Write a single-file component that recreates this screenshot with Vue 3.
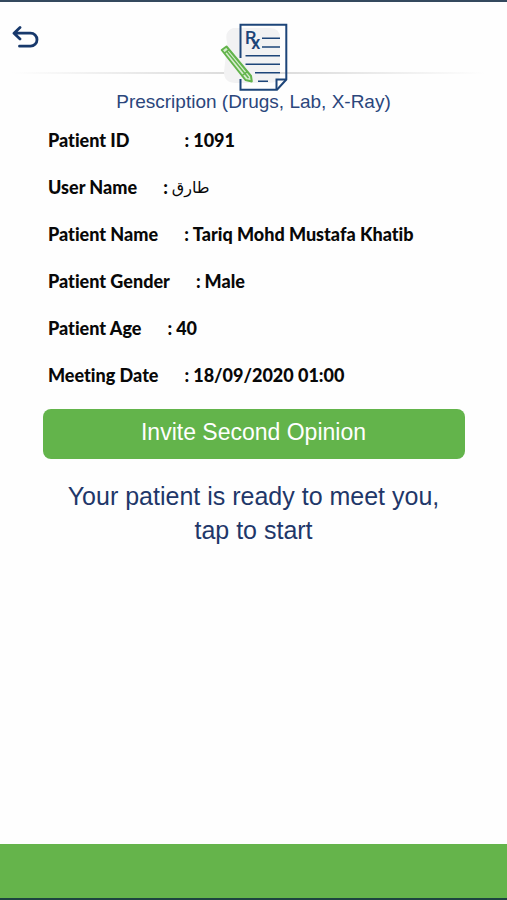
<script setup>
const details = [
  { label: 'Patient ID', value: '1091', wide: true },
  { label: 'User Name', value: 'طارق', arabic: true },
  { label: 'Patient Name', value: 'Tariq Mohd Mustafa Khatib' },
  { label: 'Patient Gender', value: 'Male' },
  { label: 'Patient Age', value: '40' },
  { label: 'Meeting Date', value: '18/09/2020 01:00' },
]
</script>

<template>
  <div class="screen">
    <header class="header">
      <hr class="rule" />
      <button class="back" type="button" aria-label="Back">
        <svg width="28" height="24" viewBox="0 0 28 24" fill="none" stroke="#17386b" stroke-width="2.800" stroke-linecap="round" stroke-linejoin="round">
          <path d="M8 1.500 2 7.200 8 12.900M2.500 7.200H18.500A6.500 6.500 0 0 1 18.500 20.200H7.500" />
        </svg>
      </button>
      <svg class="emblem" width="74" height="72" viewBox="217 20 74 72" fill="none" aria-hidden="true">
        <path d="M233 28h37q10 0 10 10v35q0 10-12 10h-32q-12 0-12-11l2-18q2-5 1-12-3-11 6-14Z" fill="#f2f2f3" />
        <path d="M240.500 58V24.800H286.300V79.500L277 89.700H240.500V79" stroke="#1d4579" stroke-width="2" />
        <path d="M276.500 89V79.500H286" stroke="#1d4579" stroke-width="2" />
        <path d="M262 38.200h18M262 47h18M245.500 55.700H280M245.500 64.300H280M255 72.700h25M258 81.200h10" stroke="#1d4579" stroke-width="1.600" />
        <text class="rx" x="245" y="44" font-size="18">R<tspan dx="-5" dy="5">x</tspan></text>
        <path d="M221.700 50 226.500 46.500 251 76l.8 5.500-6.300-1.500Z" fill="#d5ecce" stroke="#63b44b" stroke-width="2" stroke-linejoin="round" />
        <path d="M224.500 53.200 229 49.700M226.500 51 248.500 78M241.500 76 247 71.800" stroke="#63b44b" stroke-width="1.500" />
      </svg>
    </header>

    <main class="content">
      <h1 class="title">Prescription (Drugs, Lab, X-Ray)</h1>
      <dl class="details">
        <div v-for="item in details" :key="item.label" class="row" :class="{ wide: item.wide }">
          <dt>{{ item.label }}</dt>
          <dd>
            <span>:</span>
            <span v-if="item.arabic" class="arabic" lang="ar" dir="rtl">{{ item.value }}</span>
            <span v-else>{{ item.value }}</span>
          </dd>
        </div>
      </dl>
      <button class="invite" type="button">Invite Second Opinion</button>
      <button class="start" type="button">Your patient is ready to meet you,<br />tap to start</button>
    </main>

    <footer class="footer"></footer>
  </div>
</template>

<style>
body {
  margin: 0;
  background: #fefefe;
}
</style>

<style scoped>
.screen {
  box-sizing: border-box;
  min-height: 100vh;
  display: flex;
  flex-direction: column;
  border-top: 2px solid #34495e;
  border-bottom: 2px solid #1d4440;
  background: #fefefe;
  font-family: "Liberation Sans", Arial, sans-serif;
}
.header {
  display: grid;
  grid-template-columns: 1fr auto 1fr;
  padding: 18px 12px 0;
}
.rule {
  grid-area: 1 / 1 / 2 / 4;
  align-self: end;
  width: 100%;
  height: 2px;
  margin: 0 0 18px;
  border: 0;
  background: linear-gradient(90deg, #fefefe, #e2e2e2 35%, #d9d9d9 50%, #e2e2e2 65%, #fefefe 98%);
}
.back {
  grid-area: 1 / 1;
  justify-self: start;
  align-self: start;
  display: flex;
  margin-top: 6px;
  padding: 0;
  border: 0;
  background: none;
  cursor: pointer;
}
.emblem {
  grid-area: 1 / 2;
  position: relative;
}
.rx {
  fill: #1d4579;
  font-family: Roboto, "Liberation Sans", sans-serif;
  font-weight: 500;
}
.content {
  flex: 1;
}
.title {
  margin: 0;
  color: #2b467c;
  font-size: 19px;
  font-weight: 400;
  line-height: 20px;
  text-align: center;
}
.details {
  margin: 5px 0 0;
  padding: 0 48px;
  color: #080808;
  font-family: Lato, "Noto Sans", sans-serif;
  font-size: 18px;
  font-weight: 900;
  font-variant-ligatures: none;
  line-height: 47px;
}
.row {
  display: flex;
  gap: 26px;
  height: 47px;
  white-space: nowrap;
}
.wide {
  gap: 55px;
}
dd {
  display: flex;
  gap: 4px;
  margin: 0;
}
.arabic {
  font-family: "DejaVu Sans", sans-serif;
  font-size: 16px;
  font-weight: 400;
}
.invite {
  display: block;
  width: calc(100% - 85px);
  height: 50px;
  margin: 10px auto 0;
  padding: 0 0 4px;
  border: 0;
  border-radius: 8px;
  background: #63b44b;
  color: #fff;
  font: 23px "Liberation Sans", Arial, sans-serif;
  cursor: pointer;
}
.start {
  display: block;
  width: 100%;
  margin: 20px 0;
  padding: 0;
  border: 0;
  background: none;
  color: #1f3769;
  font: 25px/34px "Liberation Sans", Arial, sans-serif;
  cursor: pointer;
}
.footer {
  height: 54px;
  background: #65b44b;
}
</style>
